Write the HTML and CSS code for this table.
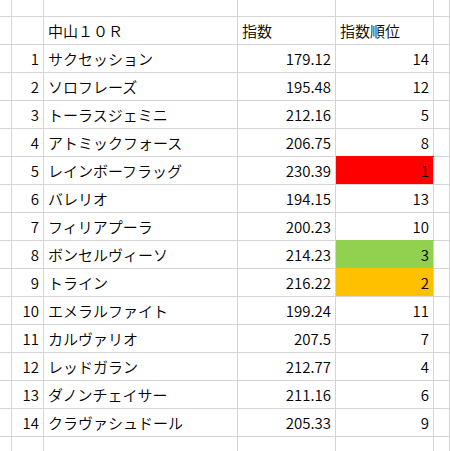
FILE: index.html
```html
<!DOCTYPE html>
<html lang="ja">
<head>
<meta charset="utf-8">
<link rel="stylesheet" href="styles.css">
</head>
<body>
<div class="sheet">
  <div class="c"></div><div class="c"></div><div class="c"></div><div class="c"></div><div class="c"></div><div class="c"></div>

  <div class="c"></div><div class="c num"></div><div class="c">中山１０Ｒ</div><div class="c">指数</div><div class="c">指数順位</div><div class="c"></div>

  <div class="c"></div><div class="c num">1</div><div class="c">サクセッション</div><div class="c num">179.12</div><div class="c num">14</div><div class="c"></div>
  <div class="c"></div><div class="c num">2</div><div class="c">ソロフレーズ</div><div class="c num">195.48</div><div class="c num">12</div><div class="c"></div>
  <div class="c"></div><div class="c num">3</div><div class="c">トーラスジェミニ</div><div class="c num">212.16</div><div class="c num">5</div><div class="c"></div>
  <div class="c"></div><div class="c num">4</div><div class="c">アトミックフォース</div><div class="c num">206.75</div><div class="c num">8</div><div class="c"></div>
  <div class="c"></div><div class="c num">5</div><div class="c">レインボーフラッグ</div><div class="c num">230.39</div><div class="c num red">1</div><div class="c"></div>
  <div class="c"></div><div class="c num">6</div><div class="c">バレリオ</div><div class="c num">194.15</div><div class="c num">13</div><div class="c"></div>
  <div class="c"></div><div class="c num">7</div><div class="c">フィリアプーラ</div><div class="c num">200.23</div><div class="c num">10</div><div class="c"></div>
  <div class="c"></div><div class="c num">8</div><div class="c">ボンセルヴィーソ</div><div class="c num">214.23</div><div class="c num green">3</div><div class="c"></div>
  <div class="c"></div><div class="c num">9</div><div class="c">トライン</div><div class="c num">216.22</div><div class="c num orange">2</div><div class="c"></div>
  <div class="c"></div><div class="c num">10</div><div class="c">エメラルファイト</div><div class="c num">199.24</div><div class="c num">11</div><div class="c"></div>
  <div class="c"></div><div class="c num">11</div><div class="c">カルヴァリオ</div><div class="c num">207.5</div><div class="c num">7</div><div class="c"></div>
  <div class="c"></div><div class="c num">12</div><div class="c">レッドガラン</div><div class="c num">212.77</div><div class="c num">4</div><div class="c"></div>
  <div class="c"></div><div class="c num">13</div><div class="c">ダノンチェイサー</div><div class="c num">211.16</div><div class="c num">6</div><div class="c"></div>
  <div class="c"></div><div class="c num">14</div><div class="c">クラヴァシュドール</div><div class="c num">205.33</div><div class="c num">9</div><div class="c"></div>

  <div class="c"></div><div class="c"></div><div class="c"></div><div class="c"></div><div class="c"></div><div class="c"></div>
</div>
</body>
</html>
```

FILE: styles.css
```css
html, body {
  margin: 0;
  padding: 0;
  background: #fff;
  overflow: hidden;
}
.sheet {
  display: grid;
  grid-template-columns: 12px 32px 194px 98px 98px 1fr;
  grid-template-rows: 17px;
  grid-auto-rows: 28px;
  width: 450px;
  height: 451px;
  overflow: hidden;
  font-family: "Noto Sans CJK JP", "Noto Sans", sans-serif;
  font-size: 15px;
  font-weight: 350;
  color: #000;
}
.c {
  box-sizing: border-box;
  border-right: 1px solid #d4d4d4;
  border-bottom: 1px solid #d4d4d4;
  display: flex;
  align-items: flex-end;
  line-height: 20px;
  padding: 0 4px 3px 4px;
  white-space: nowrap;
  overflow: hidden;
}
.num {
  justify-content: flex-end;
}
.red { background: #ff0000; box-shadow: 0 -1px 0 #ff0000; }
.green { background: #92d050; box-shadow: 0 -1px 0 #92d050; }
.orange { background: #ffc000; box-shadow: 0 -1px 0 #ffc000; }
```
